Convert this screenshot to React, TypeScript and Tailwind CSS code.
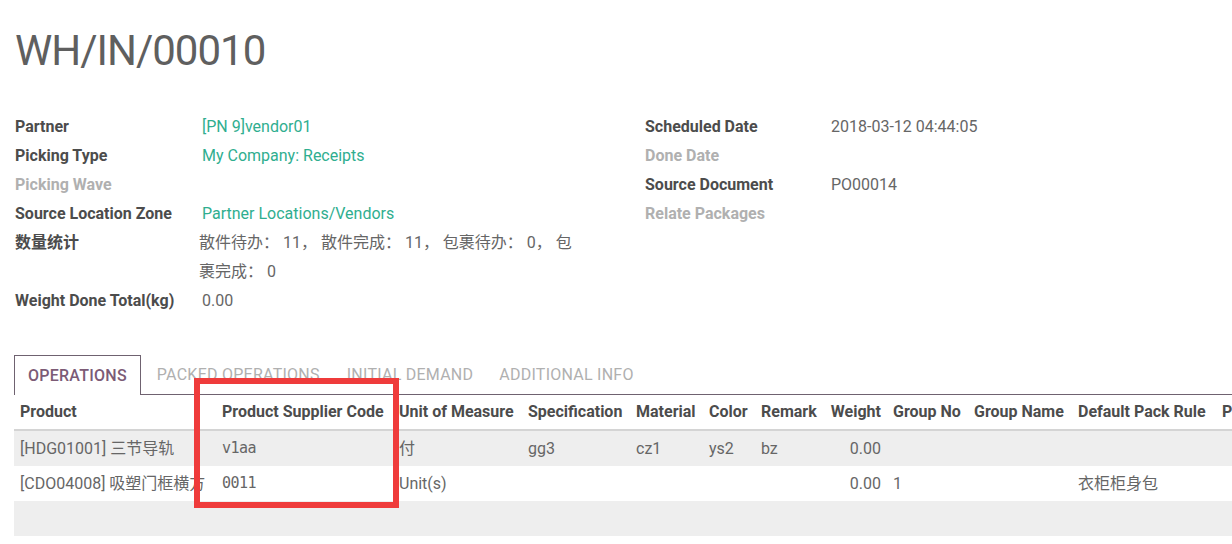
import React from "react";

const font = { fontFamily: "Roboto, 'Noto Sans CJK SC', sans-serif" };

function Field({ label, value, dim, link }: { label: string; value?: string; dim?: boolean; link?: boolean }) {
  return (
    <div className="flex">
      <div className={`w-[187px] shrink-0 font-bold leading-[29px] ${dim ? "text-[#b0b0b0]" : "text-[#4c4c4c]"}`}>{label}</div>
      <div className={`leading-[29px] ${link ? "text-[#2fae8f]" : "text-[#666666]"}`}>{value}</div>
    </div>
  );
}

function RField({ label, value, dim }: { label: string; value?: string; dim?: boolean }) {
  return (
    <div className="flex">
      <div className={`w-[186px] shrink-0 font-bold leading-[29px] ${dim ? "text-[#b0b0b0]" : "text-[#4c4c4c]"}`}>{label}</div>
      <div className="leading-[29px] text-[#666666]">{value}</div>
    </div>
  );
}

const cols: { name: string; w: number; right?: boolean }[] = [
  { name: "Product", w: 202 },
  { name: "Product Supplier Code", w: 177 },
  { name: "Unit of Measure", w: 129 },
  { name: "Specification", w: 108 },
  { name: "Material", w: 73 },
  { name: "Color", w: 52 },
  { name: "Remark", w: 68 },
  { name: "Weight", w: 64, right: true },
  { name: "Group No", w: 81 },
  { name: "Group Name", w: 104 },
  { name: "Default Pack Rule", w: 144 },
  { name: "P", w: 40 },
];

const rows: string[][] = [
  ["[HDG01001] 三节导轨", "v1aa", "付", "gg3", "cz1", "ys2", "bz", "0.00", "", "", "", ""],
  ["[CDO04008] 吸塑门框横方", "0011", "Unit(s)", "", "", "", "", "0.00", "1", "", "衣柜柜身包", ""],
];

export default function App() {
  return (
    <div className="relative w-[1232px] h-[544px] overflow-hidden bg-white text-[16px]" style={font}>
      <div className="pl-[15px] pt-[27px]">
        <h1 className="text-[42px] leading-[48px] tracking-[-1px] text-[#5f5f5f] font-normal">WH/IN/00010</h1>
      </div>
      <div className="flex pl-[15px] pt-[37px]">
        <div className="w-[630px]">
          <Field label="Partner" value="[PN 9]vendor01" link />
          <Field label="Picking Type" value="My Company: Receipts" link />
          <Field label="Picking Wave" dim />
          <Field label="Source Location Zone" value="Partner Locations/Vendors" link />
          <div className="flex">
            <div className="w-[184px] shrink-0 font-bold leading-[29px] text-[#4c4c4c]">数量统计</div>
            <div className="w-[380px] leading-[29px] text-[#666666]">散件待办： 11， 散件完成： 11， 包裹待办： 0， 包裹完成： 0</div>
          </div>
          <Field label="Weight Done Total(kg)" value="0.00" />
        </div>
        <div>
          <RField label="Scheduled Date" value="2018-03-12 04:44:05" />
          <RField label="Done Date" dim />
          <RField label="Source Document" value="PO00014" />
          <RField label="Relate Packages" dim />
        </div>
      </div>
      <div className="pl-[14px] pt-[40px]">
        <div className="flex items-end border-b border-[#6f6270]">
          <div className="-mb-px border border-b-0 border-[#6f6270] bg-white px-[13px] pt-[9px] pb-[8px] font-medium leading-[22px] tracking-[0.25px] text-[#7c5b76]">OPERATIONS</div>
          <div className="pl-[16px] pr-[14px] pb-[8px] leading-[22px] tracking-[0.25px] text-[#b0b0b0]">PACKED OPERATIONS</div>
          <div className="px-[13px] pb-[8px] leading-[22px] tracking-[0.25px] text-[#b0b0b0]">INITIAL DEMAND</div>
          <div className="px-[13px] pb-[8px] leading-[22px] tracking-[0.25px] text-[#b0b0b0]">ADDITIONAL INFO</div>
        </div>
        <div>
          <div className="flex h-[36px] items-center border-b-2 border-[#d4d4d4]">
            {cols.map((c) => (
              <div key={c.name} style={{ width: c.w }} className={`shrink-0 whitespace-nowrap px-[6px] font-bold text-[#4c4c4c] ${c.right ? "text-right" : ""}`}>{c.name}</div>
            ))}
          </div>
          {rows.map((r, i) => (
            <div key={i} className={`flex h-[35px] items-center ${i % 2 === 0 ? "bg-[#eeeeee]" : "bg-white"}`}>
              {r.map((v, j) => (
                <div key={j} style={{ width: cols[j].w }} className={`shrink-0 overflow-hidden whitespace-nowrap px-[6px] text-[#666666] ${cols[j].right ? "text-right" : ""} ${j === 1 ? "font-['DejaVu_Sans_Mono'] text-[15px] tracking-[-0.5px]" : ""}`}>{v}</div>
              ))}
            </div>
          ))}
          <div className="h-[35px] bg-[#eeeeee]" />
        </div>
      </div>
      <div className="absolute left-[194px] top-[378px] h-[130px] w-[205px] border-[6px] border-[#ef3b3b]" />
    </div>
  );
}
